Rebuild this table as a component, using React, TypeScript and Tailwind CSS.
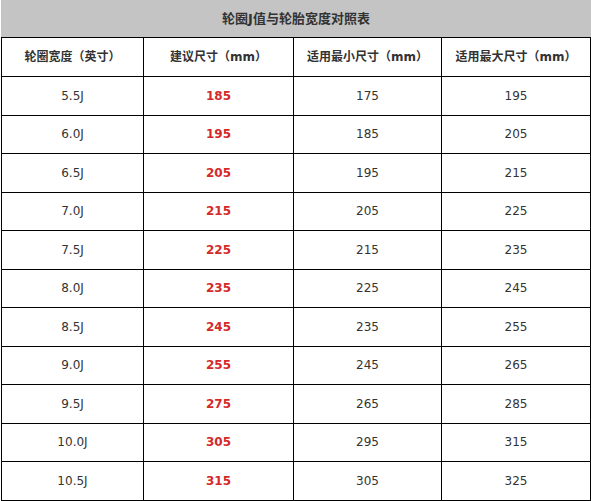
const rows: [string, string, string, string][] = [
  ['5.5J', '185', '175', '195'],
  ['6.0J', '195', '185', '205'],
  ['6.5J', '205', '195', '215'],
  ['7.0J', '215', '205', '225'],
  ['7.5J', '225', '215', '235'],
  ['8.0J', '235', '225', '245'],
  ['8.5J', '245', '235', '255'],
  ['9.0J', '255', '245', '265'],
  ['9.5J', '275', '265', '285'],
  ['10.0J', '305', '295', '315'],
  ['10.5J', '315', '305', '325'],
]

const headers = ['轮圈宽度（英寸）', '建议尺寸（mm）', '适用最小尺寸（mm）', '适用最大尺寸（mm）']

const font = "font-['DejaVu_Sans','Noto_Sans_CJK_SC',sans-serif]"

export default function App() {
  return (
    <div className={`w-[591px] h-[501px] bg-white pl-[1px] ${font}`}>
      <table className="w-[589px] border-collapse table-fixed text-[12px] text-[#333]">
        <colgroup>
          <col className="w-[142px]" />
          <col className="w-[150px]" />
          <col className="w-[148px]" />
          <col className="w-[149px]" />
        </colgroup>
        <thead>
          <tr className="h-[37px] bg-[#c4c4c4]">
            <th colSpan={4} className="border border-[#c4c4c4] border-b-black text-[13px] font-bold text-[#333]">
              轮圈J值与轮胎宽度对照表
            </th>
          </tr>
          <tr className="h-[39px]">
            {headers.map((h) => (
              <th key={h} className="border border-black font-bold text-[12px] text-[#333]">
                {h}
              </th>
            ))}
          </tr>
        </thead>
        <tbody>
          {rows.map((r) => (
            <tr key={r[0]} className="h-[38.5px]">
              <td className="border border-black text-center">{r[0]}</td>
              <td className="border border-black text-center font-bold text-[#d42a2a]">{r[1]}</td>
              <td className="border border-black text-center">{r[2]}</td>
              <td className="border border-black text-center">{r[3]}</td>
            </tr>
          ))}
        </tbody>
      </table>
    </div>
  )
}
